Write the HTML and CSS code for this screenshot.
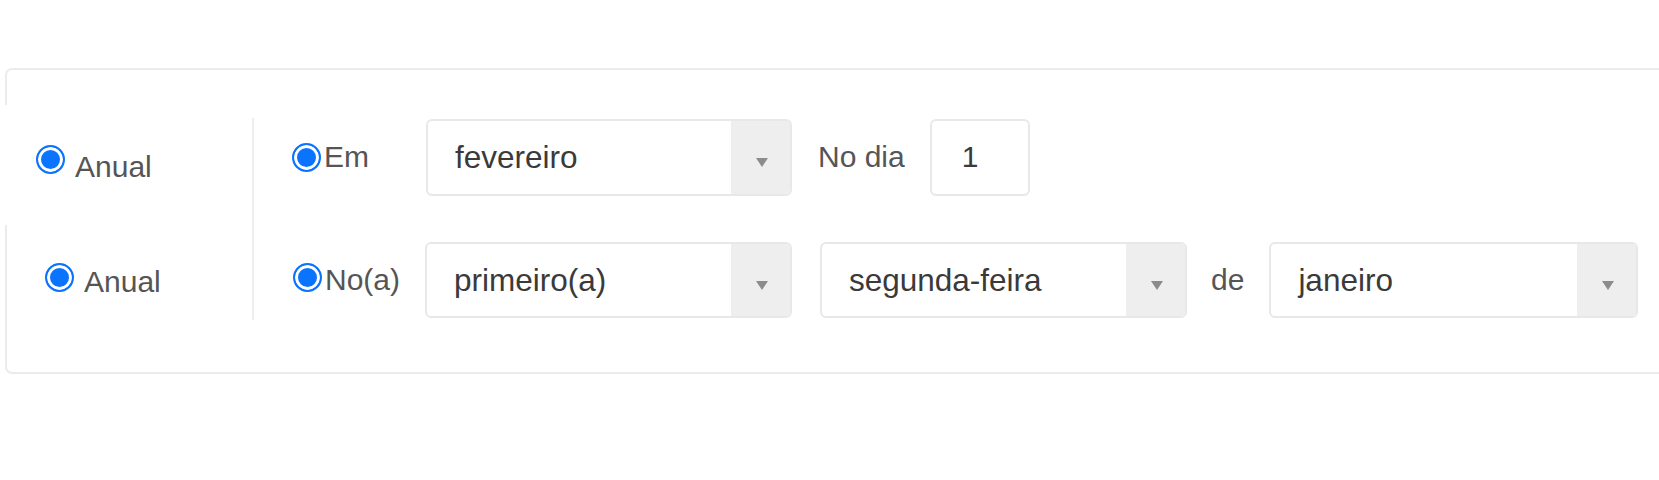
FILE: index.html
```html
<!DOCTYPE html>
<html lang="pt">
<head>
<meta charset="utf-8">
<title>Anual</title>
<link rel="stylesheet" href="styles.css">
</head>
<body>
<div class="page">
  <div class="panel">
    <div class="row row-first">
      <div class="left-cell left-first">
        <span class="radio"></span><span class="left-label">Anual</span>
      </div>
      <div class="right right-first">
        <label class="opt"><span class="radio"></span><span class="opt-label">Em</span></label>
        <div class="select"><span class="select-text">fevereiro</span><span class="select-arrow"><span class="tri"></span></span></div>
        <span class="text">No dia</span>
        <div class="input">1</div>
      </div>
    </div>
    <div class="row row-second">
      <div class="left-cell left-second">
        <span class="radio"></span><span class="left-label">Anual</span>
      </div>
      <div class="right right-second">
        <label class="opt"><span class="radio"></span><span class="opt-label">No(a)</span></label>
        <div class="select"><span class="select-text">primeiro(a)</span><span class="select-arrow"><span class="tri"></span></span></div>
        <div class="select"><span class="select-text">segunda-feira</span><span class="select-arrow"><span class="tri"></span></span></div>
        <span class="text">de</span>
        <div class="select select-wide"><span class="select-text">janeiro</span><span class="select-arrow"><span class="tri"></span></span></div>
      </div>
    </div>
  </div>
</div>
</body>
</html>
```

FILE: styles.css
```css
html, body {
  margin: 0;
  padding: 0;
  background: #ffffff;
  overflow: hidden;
}
body {
  font-family: "Liberation Sans", Arial, sans-serif;
  color: #555555;
}
.page {
  padding-top: 68px;
  padding-left: 5px;
}
.panel {
  width: 1720px;
  box-sizing: border-box;
  border: 2px solid #e9ecef;
  border-radius: 7px;
  padding-top: 35px;
  padding-bottom: 52px;
}
.row {
  display: flex;
}
.row-first {
  margin-left: -4px;
  height: 120px;
  background: #ffffff;
  position: relative;
  z-index: 0;
}
.row-second {
  margin-top: -25px;
  margin-left: -4px;
  height: 120px;
  position: relative;
  z-index: 1;
}
.left-cell {
  display: flex;
  align-items: flex-start;
  border-right: 2px solid #eceef1;
  box-sizing: content-box;
  flex: none;
}
.left-first {
  margin-top: 13px;
  height: 82px;
  padding-left: 33px;
  width: 216px;
}
.left-first .radio {
  margin-top: 27px;
}
.left-first .left-label {
  margin-top: 34px;
}
.left-second {
  height: 120px;
  padding-left: 42px;
  width: 207px;
}
.left-second .radio {
  margin-top: 63px;
}
.left-second .left-label {
  margin-top: 67px;
}
.radio {
  display: inline-block;
  flex: none;
  width: 29px;
  height: 29px;
  box-sizing: border-box;
  border-radius: 50%;
  border: 2.5px solid #0a74ff;
  background: #0a74ff;
  box-shadow: inset 0 0 0 3px #ffffff;
}
.left-label {
  font-size: 30px;
  color: #555555;
  margin-left: 10px;
  line-height: 30px;
}
.right {
  display: flex;
  align-items: center;
}
.right-first {
  margin-top: 13px;
  height: 78px;
  padding-left: 38px;
}
.right-second {
  padding-top: 42px;
  height: 76px;
  padding-left: 39px;
}
.opt {
  display: flex;
  align-items: center;
  width: 134px;
  flex: none;
}
.right-second .opt {
  width: 132px;
}
.right-second .opt .radio {
  margin-top: -6px;
}
.opt-label {
  font-size: 30px;
  color: #555555;
  margin-left: 3px;
  line-height: 1;
}
.select {
  display: flex;
  width: 366px;
  height: 77px;
  box-sizing: border-box;
  border: 2px solid #e6e9ec;
  border-radius: 6px;
  overflow: hidden;
  background: #ffffff;
  flex: none;
}
.right-second .select {
  height: 76px;
  width: 367px;
}
.right-second .select + .select {
  margin-left: 28px;
}
.right-second .select-wide {
  width: 369px;
}
.select-text {
  flex: 1;
  display: flex;
  align-items: center;
  padding-left: 27px;
  font-size: 31.5px;
  color: #3a3a3a;
}
.select-arrow {
  width: 59px;
  background: #eeeeee;
  display: flex;
  align-items: center;
  justify-content: center;
}
.tri {
  width: 0;
  height: 0;
  border-left: 6px solid transparent;
  border-right: 6px solid transparent;
  border-top: 9px solid #8c8c8c;
  margin-top: 10px;
  margin-left: 2px;
}
.text {
  font-size: 30px;
  color: #555555;
  margin: 0 25px 0 26px;
}
.right-second .text {
  margin: 0 25px 0 24px;
}
.input {
  width: 100px;
  height: 77px;
  box-sizing: border-box;
  border: 2px solid #e6e9ec;
  border-radius: 6px;
  display: flex;
  align-items: center;
  padding-left: 30px;
  font-size: 30px;
  color: #3a3a3a;
}
```
